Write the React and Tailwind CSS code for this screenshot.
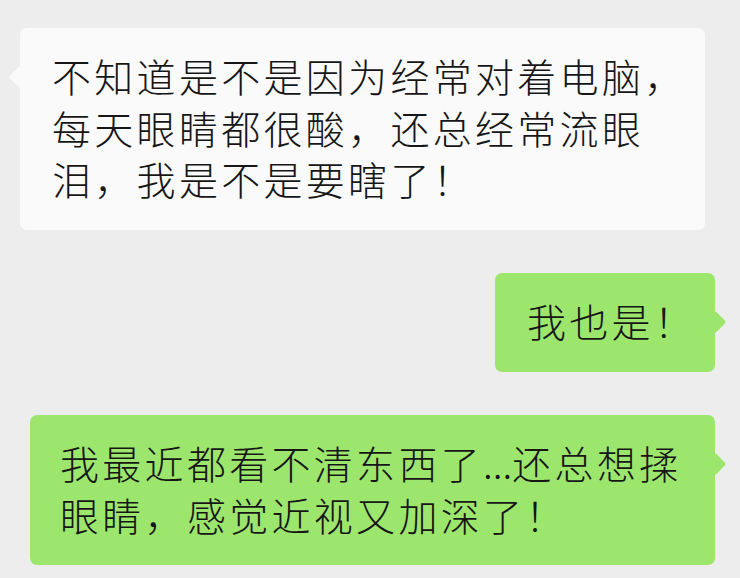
import React from 'react';

const font = { fontFamily: '"Noto Sans CJK SC", "Noto Sans", sans-serif' };

const Tail = ({ side, color }) => (
  <span
    className={`absolute top-[41px] w-4 h-4 rotate-45 rounded-[2px] ${color} ${
      side === 'left' ? 'left-[-8px]' : 'right-[-8px]'
    }`}
  />
);

const App = () => {
  return (
    <div
      className="w-[740px] h-[578px] bg-[#ededed] flex flex-col text-[#161616] text-[39px] font-light leading-[51.5px] tracking-[3.3px]"
      style={font}
    >
      <div className="relative ml-[20px] mt-[28px] w-[685px] h-[202px] bg-[#fafafa] rounded-[7px] pl-[32px] pt-[22px] whitespace-nowrap">
        <Tail side="left" color="bg-[#fafafa]" />
        <p className="relative">
          不知道是不是因为经常对着电脑，
          <br />
          每天眼睛都很酸，还总经常流眼
          <br />
          泪，我是不是要瞎了！
        </p>
      </div>

      <div className="relative self-end mr-[25px] mt-[43px] w-[220px] h-[99px] bg-[#9de66d] rounded-[7px] pl-[32px] pt-[22px] whitespace-nowrap">
        <Tail side="right" color="bg-[#9de66d]" />
        <p className="relative">我也是！</p>
      </div>

      <div className="relative ml-[30px] mt-[43px] w-[685px] h-[150px] bg-[#9de66d] rounded-[7px] pl-[30px] pt-[22px] whitespace-nowrap">
        <Tail side="right" color="bg-[#9de66d]" />
        <p className="relative">
          我最近都看不清东西了<span className="tracking-[0px]">...</span>还总想揉
          <br />
          眼睛，感觉近视又加深了！
        </p>
      </div>
    </div>
  );
};

export default App;
